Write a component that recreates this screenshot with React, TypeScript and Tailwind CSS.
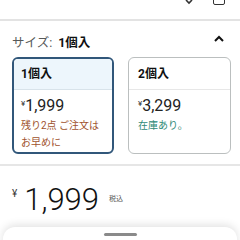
export default function App() {
  return (
    <div
      className="relative w-[240px] h-[240px] overflow-hidden bg-white text-[#0f1111]"
      style={{ fontFamily: 'Roboto, "Noto Sans CJK JP", sans-serif' }}
    >
      {/* clipped top bar */}
      <div className="h-[21px] relative border-b-2 border-[#e3e3e3]">
        <svg className="absolute left-[184px] top-[-4px]" width="10" height="10" viewBox="0 0 10 10">
          <path d="M2 4 L5 7 L8 4" fill="none" stroke="#333" strokeWidth="1.6" />
        </svg>
        <div className="absolute left-[213px] top-[-5px] w-[12px] h-[10px] border-[1.5px] border-[#333] rounded-[2px]" />
      </div>

      {/* size header */}
      <div className="flex items-center justify-between pl-[12px] pr-[15px] pt-[8px] h-[36px]">
        <div className="flex items-center text-[12.5px]">
          <span className="text-[#565959]">サイズ:</span>
          <span className="ml-[6px] font-bold">1個入</span>
        </div>
        <svg width="12" height="10" viewBox="0 0 12 10" className="-mt-[8px]">
          <path d="M2 7 L6 3 L10 7" fill="none" stroke="#111" strokeWidth="2" />
        </svg>
      </div>

      {/* options */}
      <div className="flex gap-[14px] pl-[12px] pr-[9px] h-[98px]">
        <div className="w-[102px] h-[97px] rounded-[6px] border-2 border-[#31577a] overflow-hidden flex flex-col">
          <div className="h-[31px] bg-[#edf6fc] border-b border-[#d8e3ea] flex items-center px-[7px] text-[12px] font-bold">
            1個入
          </div>
          <div className="px-[7px] pt-[8px]">
            <div className="flex items-start leading-none">
              <span className="text-[8px] mt-[2px] text-[#333]">¥</span>
              <span className="text-[16px] text-[#222]">1,999</span>
            </div>
            <div className="mt-[3px] text-[10px] leading-[17px] text-[#a0522d]">
              残り2点 ご注文は
              <br />
              お早めに
            </div>
          </div>
        </div>
        <div className="w-[103px] h-[97px] rounded-[6px] border border-[#bbbfbf] overflow-hidden flex flex-col">
          <div className="h-[32px] border-b border-[#e7e7e7] flex items-center px-[9px] text-[12px] font-bold">
            2個入
          </div>
          <div className="px-[9px] pt-[8px]">
            <div className="flex items-start leading-none">
              <span className="text-[8px] mt-[2px] text-[#333]">¥</span>
              <span className="text-[16px] text-[#222]">3,299</span>
            </div>
            <div className="mt-[3px] text-[10px] leading-[17px] text-[#2f8a78]">在庫あり。</div>
          </div>
        </div>
      </div>

      <div className="mt-[9px] h-[2px] bg-[#e6e6e6]" />

      {/* price */}
      <div className="flex items-start pl-[12px] pt-[18px] leading-none">
        <span className="text-[10px] mt-[5px] text-[#333]">¥</span>
        <span className="ml-[7px] text-[31px] font-light text-[#111]">1,999</span>
        <span className="ml-[10px] mt-[12px] text-[7px] text-[#555]">税込</span>
      </div>

      {/* bottom sheet */}
      <div className="absolute left-[3px] right-[3px] top-[227px] h-[30px] bg-white rounded-t-[12px] shadow-[0_-2px_8px_rgba(0,0,0,0.12)] flex justify-center">
        <div className="mt-[6px] w-[33px] h-[3px] rounded-full bg-[#8a8a8a]" />
      </div>
    </div>
  );
}
